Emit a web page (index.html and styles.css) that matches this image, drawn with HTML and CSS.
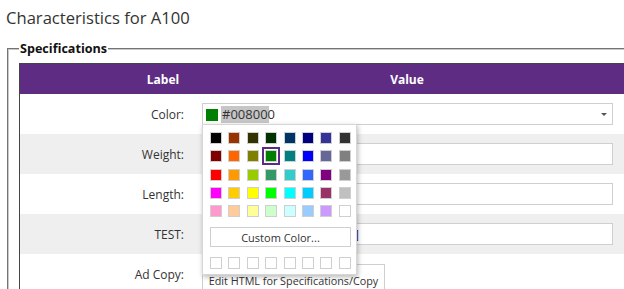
FILE: index.html
```html
<!DOCTYPE html>
<html>
<head>
<meta charset="utf-8">
<link rel="stylesheet" href="styles.css">
</head>
<body>
<div class="page">
  <h1 class="title">Characteristics for A100</h1>
  <fieldset class="specs">
    <legend class="specs-legend">Specifications</legend>
    <div class="table">
      <div class="thead">
        <div class="th th-label">Label</div>
        <div class="th th-value">Value</div>
      </div>
      <div class="row">
        <div class="label">Color:</div>
        <div class="value value-color">
          <div class="select">
            <span class="select-swatch"></span>
            <span class="select-text">#008000</span>
            <span class="select-arrow"></span>
          </div>
          <div class="picker">
            <div class="palette">
              <span class="sw" style="background:#000000"></span>
              <span class="sw" style="background:#993300"></span>
              <span class="sw" style="background:#333300"></span>
              <span class="sw" style="background:#003300"></span>
              <span class="sw" style="background:#003366"></span>
              <span class="sw" style="background:#000080"></span>
              <span class="sw" style="background:#333399"></span>
              <span class="sw" style="background:#333333"></span>
              <span class="sw" style="background:#800000"></span>
              <span class="sw" style="background:#ff6600"></span>
              <span class="sw" style="background:#808000"></span>
              <span class="sw sw-selected" style="background:#008000"></span>
              <span class="sw" style="background:#008080"></span>
              <span class="sw" style="background:#0000ff"></span>
              <span class="sw" style="background:#666699"></span>
              <span class="sw" style="background:#808080"></span>
              <span class="sw" style="background:#ff0000"></span>
              <span class="sw" style="background:#ff9900"></span>
              <span class="sw" style="background:#99cc00"></span>
              <span class="sw" style="background:#339966"></span>
              <span class="sw" style="background:#33cccc"></span>
              <span class="sw" style="background:#3366ff"></span>
              <span class="sw" style="background:#800080"></span>
              <span class="sw" style="background:#999999"></span>
              <span class="sw" style="background:#ff00ff"></span>
              <span class="sw" style="background:#ffcc00"></span>
              <span class="sw" style="background:#ffff00"></span>
              <span class="sw" style="background:#00ff00"></span>
              <span class="sw" style="background:#00ffff"></span>
              <span class="sw" style="background:#00ccff"></span>
              <span class="sw" style="background:#993366"></span>
              <span class="sw" style="background:#c0c0c0"></span>
              <span class="sw" style="background:#ff99cc"></span>
              <span class="sw" style="background:#ffcc99"></span>
              <span class="sw" style="background:#ffff99"></span>
              <span class="sw" style="background:#ccffcc"></span>
              <span class="sw" style="background:#ccffff"></span>
              <span class="sw" style="background:#99ccff"></span>
              <span class="sw" style="background:#cc99ff"></span>
              <span class="sw" style="background:#ffffff"></span>
            </div>
            <button class="custom-btn">Custom Color...</button>
            <div class="palette">
              <span class="sw"></span><span class="sw"></span><span class="sw"></span><span class="sw"></span>
              <span class="sw"></span><span class="sw"></span><span class="sw"></span><span class="sw"></span>
            </div>
          </div>
        </div>
      </div>
      <div class="row row-alt">
        <div class="label">Weight:</div>
        <div class="value"><div class="input"></div></div>
      </div>
      <div class="row">
        <div class="label">Length:</div>
        <div class="value"><div class="input"></div></div>
      </div>
      <div class="row row-alt">
        <div class="label">TEST:</div>
        <div class="value"><div class="input input-test"><span class="test-text">test value]</span></div></div>
      </div>
      <div class="row">
        <div class="label">Ad Copy:</div>
        <div class="value"><button class="edit-btn">Edit HTML for Specifications/Copy</button></div>
      </div>
    </div>
  </fieldset>
</div>
</body>
</html>
```

FILE: styles.css
```css
html, body {
  margin: 0;
  padding: 0;
  overflow: hidden;
  background: #fff;
}
body {
  font-family: "Open Sans", "Noto Sans", sans-serif;
  color: #333;
}
.page {
  width: 660px;
  padding: 0 0 0 7px;
}
.title {
  margin: 0 0 0 -1px;
  padding: 7px 0 0 0;
  font-size: 16.6px;
  font-weight: normal;
  line-height: 22px;
  color: #333;
}
.specs {
  margin: 11px 0 0 0;
  padding: 0 0 0 10px;
  border: 2px groove #c8c8c8;
  border-right: none;
  border-bottom: none;
}
.specs-legend {
  font-size: 12.6px;
  font-weight: bold;
  color: #111;
  padding: 0 1px;
  margin-left: 0;
  line-height: 18px;
}
.table {
  margin-top: 5px;
  border-top: 1px solid #444;
  border-left: 1px solid #444;
}
.thead {
  display: flex;
  height: 30px;
  background: #5e2c83;
  color: #fff;
  font-size: 12px;
  font-weight: bold;
  align-items: center;
}
.th-label {
  width: 286px;
  text-align: center;
}
.th-value {
  width: 202px;
  text-align: center;
}
.row {
  display: flex;
  height: 40px;
  align-items: center;
  font-size: 12px;
}
.row-alt {
  background: #efefef;
}
.label {
  width: 164px;
  text-align: right;
  padding-right: 7px;
  box-sizing: content-box;
}
.value {
  position: relative;
  padding-left: 11px;
  width: 411px;
}
.select, .input {
  box-sizing: border-box;
  height: 22px;
  border: 1px solid #cfcfcf;
  background: #fff;
  display: flex;
  align-items: center;
}
.select-swatch {
  width: 12px;
  height: 12px;
  margin: 2px 3px 0 3px;
  background: #008000;
}
.select-text {
  background: #c6c6c6;
  font-size: 13px;
  line-height: 17px;
  padding: 0 0 0 1px;
  width: 47px;
  color: #333;
}
.select-arrow {
  margin-left: auto;
  margin-right: 5px;
  width: 0;
  height: 0;
  border-left: 3px solid transparent;
  border-right: 3px solid transparent;
  border-top: 3px solid #555;
}
.input-test {
  overflow: hidden;
}
.test-text {
  display: block;
  width: 156px;
  text-align: right;
  overflow: hidden;
  color: #3c2a78;
  font-size: 13px;
  white-space: nowrap;
}
.picker {
  position: absolute;
  left: 11px;
  top: 21px;
  width: 155px;
  box-sizing: border-box;
  background: #fff;
  border: 1px solid #d6d6d6;
  box-shadow: 1px 2px 5px rgba(0,0,0,0.28);
  padding: 7px 6px 5px 7px;
  z-index: 5;
}
.palette {
  display: grid;
  grid-template-columns: repeat(8, 12px);
  column-gap: 6.4px;
  row-gap: 6.3px;
}
.sw {
  display: block;
  width: 12px;
  height: 12px;
  box-sizing: border-box;
  border: 1px solid #cfcfcf;
  background-clip: padding-box;
}
.sw-selected {
  outline: 2px solid #5b2c86;
  outline-offset: 1px;
}
.custom-btn {
  display: block;
  margin: 10px 0 10px 0;
  width: 141px;
  height: 20px;
  box-sizing: border-box;
  border: 1px solid #cfcfcf;
  background: #fff;
  font-family: "Open Sans", "Noto Sans", sans-serif;
  font-size: 11px;
  color: #333;
  padding: 0;
}
.edit-btn {
  margin-top: 10px;
  width: 183px;
  height: 30px;
  box-sizing: border-box;
  border: 1px solid #cfcfcf;
  background: #fff;
  font-family: "Open Sans", "Noto Sans", sans-serif;
  font-size: 10.8px;
  color: #333;
  padding: 2px 0 0 0;
  text-align: center;
  white-space: nowrap;
}
```
